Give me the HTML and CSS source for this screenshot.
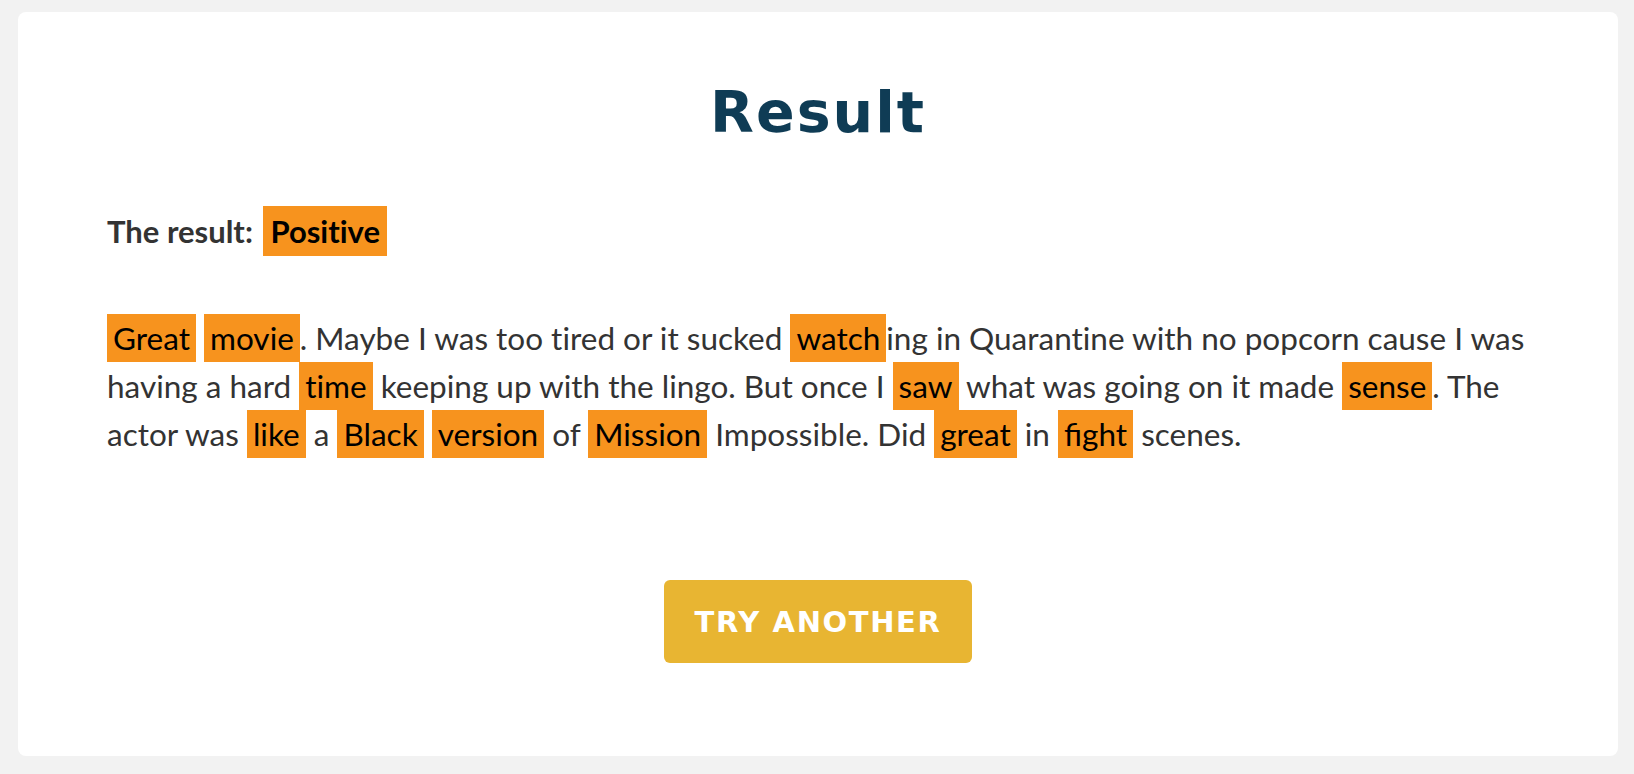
FILE: index.html
```html
<!DOCTYPE html>
<html lang="en">
<head>
<meta charset="utf-8">
<title>Result</title>
<link rel="stylesheet" href="styles.css">
</head>
<body>
<main class="card">
  <h1 class="title">Result</h1>
  <p class="verdict">The result: <span class="hl hl-verdict">Positive</span></p>
  <p class="review"><span class="hl">Great</span> <span class="hl">movie</span>. Maybe I was too tired or it sucked <span class="hl">watch</span>ing in Quarantine with no popcorn cause I was having a hard <span class="hl">time</span> keeping up with the lingo. But once I <span class="hl">saw</span> what was going on it made <span class="hl">sense</span>. The actor was <span class="hl">like</span> a <span class="hl">Black</span> <span class="hl">version</span> of <span class="hl">Mission</span> Impossible. Did <span class="hl">great</span> in <span class="hl hl-lig">fight</span> scenes.</p>
  <div class="actions">
    <button class="btn" type="button">TRY ANOTHER</button>
  </div>
</main>
</body>
</html>
```
FILE: styles.css
```css
html, body {
  margin: 0;
  padding: 0;
}
body {
  background: #f2f2f2;
  padding: 12px 16px 18px 18px;
  font-family: Lato, "Liberation Sans", sans-serif;
  color: #333333;
  font-variant-ligatures: none;
  font-feature-settings: "liga" 0;
}
.card {
  background: #ffffff;
  border-radius: 8px;
  height: 744px;
  box-sizing: border-box;
  padding: 67px 89px 0 89px;
  display: flex;
  flex-direction: column;
}
.title {
  margin: 0;
  text-align: center;
  font-family: "DejaVu Sans", Inter, sans-serif;
  font-weight: 700;
  font-size: 57px;
  line-height: 66px;
  letter-spacing: 2px;
  color: #0f3c55;
}
.verdict {
  margin: 61px 0 0 0;
  font-weight: 700;
  font-size: 31px;
  line-height: 50px;
  color: #333333;
}
.hl {
  display: inline-block;
  background: #f7931e;
  color: #000000;
  padding: 0 6px;
}
.hl-lig {
  font-variant-ligatures: common-ligatures;
  font-feature-settings: "liga" 1;
}
.hl-verdict {
  padding: 0 7px;
  margin-left: 3px;
}
.review {
  margin: 58px 0 0 0;
  font-size: 31.5px;
  line-height: 48px;
  color: #333333;
}
.actions {
  display: flex;
  justify-content: center;
  margin-top: 122px;
}
.btn {
  width: 308px;
  height: 83px;
  border: none;
  border-radius: 6px;
  background: #e8b532;
  color: #ffffff;
  font-family: "DejaVu Sans", Inter, sans-serif;
  font-weight: 700;
  font-size: 29px;
  letter-spacing: 1.6px;
}
```
